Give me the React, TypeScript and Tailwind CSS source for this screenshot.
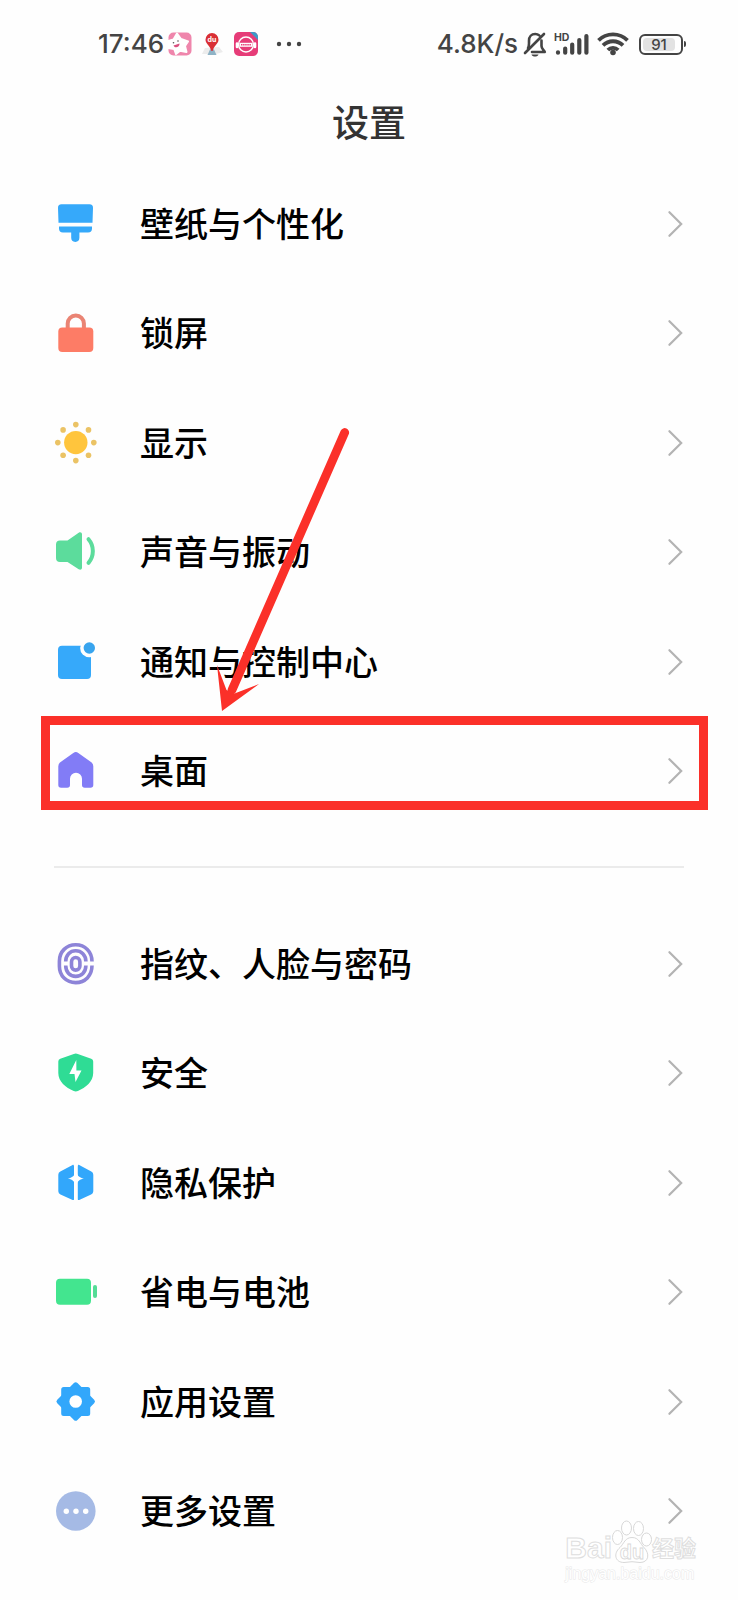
import type { ReactNode } from "react";

type Item = { label: string; icon: ReactNode; marked?: boolean };

const Icon = ({ children }: { children: ReactNode }) => (
	<svg viewBox="0 0 44 44" className="size-11 shrink-0" aria-hidden="true">
		{children}
	</svg>
);

const BrushIcon = () => (
	<Icon>
		<path
			fill="#36a9fa"
			d="M7.5 2.3h28a3.5 3.5 0 0 1 3.5 3.6l-.5 14.8h-34L4 5.9a3.5 3.5 0 0 1 3.5-3.6ZM5 24.4h33v2a4 4 0 0 1-4 4h-8.6v5.4a4.1 4.1 0 0 1-8.2 0v-5.4H9a4 4 0 0 1-4-4Z"
		/>
	</Icon>
);

const LockIcon = () => (
	<Icon>
		<path
			fill="none"
			stroke="#ea8474"
			strokeWidth="4"
			d="M13.7 18v-5.4a8.1 8.1 0 0 1 16.2 0V18"
		/>
		<rect x="4.3" y="16.4" width="35" height="24.6" rx="4" fill="#fd7c66" />
	</Icon>
);

const SunIcon = () => (
	<Icon>
		<circle cx="21.8" cy="21.6" r="11.7" fill="#ffc53d" />
		<g fill="#ebc365">
			<circle cx="21.8" cy="3.6" r="2.8" />
			<circle cx="21.8" cy="39.6" r="2.8" />
			<circle cx="3.8" cy="21.6" r="2.8" />
			<circle cx="39.8" cy="21.6" r="2.8" />
			<circle cx="9.1" cy="8.9" r="2.8" />
			<circle cx="34.5" cy="8.9" r="2.8" />
			<circle cx="9.1" cy="34.3" r="2.8" />
			<circle cx="34.5" cy="34.3" r="2.8" />
		</g>
	</Icon>
);

const SoundIcon = () => (
	<Icon>
		<path
			fill="#5cdc9c"
			d="M6 10.4h7.5l11.2-7.7c1.5-1 3.3-.4 3.3 1.5v33.6c0 1.9-1.8 2.5-3.3 1.5l-11.2-7.2H6a4 4 0 0 1-4-4V14.4a4 4 0 0 1 4-4Z"
		/>
		<path
			fill="none"
			stroke="#5cdc9c"
			strokeWidth="4"
			strokeLinecap="round"
			d="M34.5 9.2c5.800 6.600 5.800 17.200 0 23.600"
		/>
	</Icon>
);

const NoticeIcon = () => (
	<Icon>
		<rect x="4" y="5.7" width="33" height="33.3" rx="4" fill="#36a9fa" />
		<circle cx="35.3" cy="8" r="9.2" fill="#fefefe" />
		<circle cx="35.3" cy="8" r="5.7" fill="#38a4ee" />
	</Icon>
);

const HomeIcon = () => (
	<Icon>
		<path
			fill="#827cf6"
			d="M19.3 4.1a4 4 0 0 1 5 0l13 9.2a5 5 0 0 1 2 4V36a2.8 2.8 0 0 1-2.8 2.8h-5.7A2.8 2.8 0 0 1 28 36v-6.2a6 6 0 0 0-12 0V36a2.8 2.8 0 0 1-2.8 2.8H7.1A2.8 2.8 0 0 1 4.3 36V17.3a5 5 0 0 1 2-4Z"
		/>
	</Icon>
);

const FingerprintIcon = () => (
	<Icon>
		<g fill="none" stroke="#8d84d8" strokeWidth="3.6">
			<path d="M38 19.6C38 9.6 31 2.8 21.7 2.8S5.4 9.6 5.4 19.2v5c0 9.600 7 16.400 16.300 16.400S38 33.800 38 23.600" />
			<path d="M11.7 19.6c0-6.600 4.400-10.800 10-10.800s10.200 4.200 10.200 10.800M11.7 23.600c0 6.600 4.400 10.800 10 10.800s10.200-4.200 10.200-10.800" />
			<rect x="17.5" y="15.5" width="8.400" height="12.600" rx="4.200" />
		</g>
	</Icon>
);

const ShieldIcon = () => (
	<Icon>
		<path
			fill="#2fdc95"
			d="M19.8 2.9a5 5 0 0 1 4 0l13.4 4.9a3 3 0 0 1 2 2.8V22c0 8.6-7.4 14.5-15.3 18a5 5 0 0 1-4.2 0C11.7 36.5 4.300 30.600 4.300 22V10.600a3 3 0 0 1 2-2.800Z"
		/>
		<path fill="#fff" d="m22.300 9-7 13.900h5.200l1 8.100 6-11.500h-5.100Z" />
	</Icon>
);

const PrivacyIcon = () => (
	<Icon>
		<path
			fill="#32a7fb"
			d="M20 5.4v33c0 .6-.7.9-1.4.6L6.5 33.4a3.6 3.6 0 0 1-2.2-3.2V13.7a3.6 3.6 0 0 1 2-3.2l12.300-6.600c.8-.4 1.400.4 1.400 1.500ZM23.800 5.400v33c0 .6.700.9 1.400.6l11.900-5.600a3.600 3.600 0 0 0 2.200-3.200V13.700a3.600 3.600 0 0 0-2-3.200L25.200 3.900c-.8-.4-1.400.4-1.400 1.500Z"
		/>
		<path
			fill="#fff"
			d="M21.900 9c.8 5.400 3 7.600 8 8.600-5 1-7.200 3.200-8 8.600-.8-5.400-3-7.600-8-8.600 5-1 7.200-3.200 8-8.600Z"
		/>
	</Icon>
);

const PowerIcon = () => (
	<Icon>
		<rect x="2" y="8.7" width="35" height="26" rx="4" fill="#43e58f" />
		<rect x="39" y="15" width="4" height="13" rx="2" fill="#54dc96" />
	</Icon>
);

const GearIcon = () => (
	<Icon>
		<g fill="#32a7fb" stroke="#32a7fb" strokeWidth="5" strokeLinejoin="round">
			<path d="M9.7 9.5h24v24h-24Z" />
			<path d="m21.7 4.8 16.7 16.7-16.7 16.700L5 21.500Z" />
		</g>
		<circle cx="21.7" cy="21.5" r="6.3" fill="#fff" />
	</Icon>
);

const MoreIcon = () => (
	<Icon>
		<circle cx="21.8" cy="22" r="19.8" fill="#a5bae5" />
		<g fill="#fff">
			<circle cx="12.3" cy="22.3" r="2.7" />
			<circle cx="22" cy="22.3" r="2.7" />
			<circle cx="31.7" cy="22.3" r="2.7" />
		</g>
	</Icon>
);

const general: Item[] = [
	{ label: "壁纸与个性化", icon: <BrushIcon /> },
	{ label: "锁屏", icon: <LockIcon /> },
	{ label: "显示", icon: <SunIcon /> },
	{ label: "声音与振动", icon: <SoundIcon /> },
	{ label: "通知与控制中心", icon: <NoticeIcon /> },
	{ label: "桌面", icon: <HomeIcon />, marked: true },
];

const device: Item[] = [
	{ label: "指纹、人脸与密码", icon: <FingerprintIcon /> },
	{ label: "安全", icon: <ShieldIcon /> },
	{ label: "隐私保护", icon: <PrivacyIcon /> },
	{ label: "省电与电池", icon: <PowerIcon /> },
	{ label: "应用设置", icon: <GearIcon /> },
	{ label: "更多设置", icon: <MoreIcon /> },
];

const SettingsList = ({ items }: { items: Item[] }) => (
	<ul>
		{items.map(({ label, icon, marked }) => (
			<li key={label} className="relative odd:h-[109px] even:h-[110px]">
				<button
					type="button"
					className="flex size-full items-center gap-[42px] px-[54px] text-left"
				>
					{icon}
					<span className="grow pt-0.5 text-[34px] leading-[48px] font-medium text-black">
						{label}
					</span>
					<svg
						viewBox="0 0 18 28"
						className="h-7 w-[18px] shrink-0"
						fill="none"
						stroke="#b3b3b3"
						strokeWidth="2.2"
						strokeLinecap="round"
						aria-hidden="true"
					>
						<path d="M3.4 2.2 15.2 14 3.4 25.8" />
					</svg>
				</button>
				{marked && (
					<div className="pointer-events-none absolute top-0 right-[30px] left-[41px] h-[94px] border-9 border-[#fb3029]" />
				)}
			</li>
		))}
	</ul>
);

const StatusBar = () => (
	<div className="flex h-[88px] items-center justify-between pr-[52px] pl-[98px] text-[26px] leading-8 font-medium text-[#444]">
		<div className="flex items-center">
			<time>17:46</time>
			<svg viewBox="0 0 24 24" className="ml-1 size-6" aria-hidden="true">
				<rect x=".5" y=".5" width="23" height="23" rx="5" fill="#ef86ac" />
				<path
					fill="#fff"
					stroke="#fff"
					strokeWidth="2"
					strokeLinejoin="round"
					d="m9 1.500 4 5.500 7 2.500-3 4.500 1.500 6-6.500-1.300L8 22l-1.800-5L0 16V9l5.500-1.500Z"
				/>
				<path fill="#d9507f" d="m5.500 13.500 6-2c.5 3.500-4.500 5.500-6 2Z" />
				<circle cx="5.500" cy="10.800" r=".8" fill="#555" />
				<circle cx="10" cy="9" r=".8" fill="#555" />
			</svg>
			<svg viewBox="0 0 24 24" className="ml-2 size-6" aria-hidden="true">
				<path fill="#ececec" d="m5 16 14-1 4 5-7 2H2Z" />
				<path fill="#8fb3c6" d="m10 17.500-2.500 5.500h9L14 17.500Z" />
				<path
					fill="#d92f35"
					d="M12 1a6.800 6.800 0 0 1 6.500 6.800c0 4-5 6-5.500 11h-2c-.5-5-5.500-7-5.500-11A6.800 6.800 0 0 1 12 1Z"
				/>
				<text
					x="12"
					y="10"
					fontSize="7"
					fontWeight="700"
					textAnchor="middle"
					fill="#fff"
				>
					du
				</text>
			</svg>
			<svg viewBox="0 0 24 24" className="ml-2.5 size-6" aria-hidden="true">
				<rect width="24" height="24" rx="5" fill="#e63c78" />
				<path fill="#3b9bc9" d="M16 0h3a5 5 0 0 1 5 5v3Z" />
				<circle cx="12" cy="12.5" r="7.500" fill="none" stroke="#fff" strokeWidth="1.400" />
				<path
					stroke="#fff"
					strokeWidth="2.600"
					strokeLinecap="round"
					d="M3 11.500v3.500M21 11.500v3.500"
				/>
				<path stroke="#fff" strokeWidth="4" d="M5.500 12.800h13" />
				<path stroke="#e63c78" strokeWidth="1.600" strokeDasharray="1.500 .6" d="M7 12.800h10" />
			</svg>
			<svg viewBox="0 0 26 6" className="ml-[18px] h-1.5 w-[26px]" fill="#444" aria-hidden="true">
				<circle cx="3" cy="3" r="2.200" />
				<circle cx="13" cy="3" r="2.200" />
				<circle cx="23" cy="3" r="2.200" />
			</svg>
		</div>
		<div className="flex items-center">
			<span>4.8K/s</span>
			<svg
				viewBox="0 0 24 26"
				className="ml-[5px] h-[26px] w-6"
				fill="none"
				stroke="#444"
				strokeWidth="2.600"
				strokeLinecap="round"
				strokeLinejoin="round"
				aria-hidden="true"
			>
				<path d="M2 22 21 3M18.500 9.500v5.500c0 2.500 1.700 3.600 3.300 6H9M5 17c.8-1.500 1-2.500 1-4.500v-2.800c0-4 2.500-6.700 6.200-6.700 1.600 0 3 .5 4 1.400" />
				<path fill="#444" stroke="none" d="M8.500 23.500h7c-.8 2.700-6.200 2.700-7 0Z" />
			</svg>
			<svg viewBox="0 0 36 26" className="ml-[7px] h-[26px] w-9" aria-hidden="true">
				<text x="0" y="9.5" fontSize="10.500" fontWeight="700" fill="#444">
					HD
				</text>
				<g stroke="#444" strokeWidth="4.200" strokeLinecap="round">
					<path d="M4 21.300v.4M11.200 17.500v4.200M18.200 13.500v8.200M25.300 9v12.700M32.400 5v16.700" />
				</g>
			</svg>
			<svg
				viewBox="0 0 32 26"
				className="ml-[7px] h-[26px] w-8"
				fill="none"
				stroke="#444"
				strokeWidth="3.800"
				aria-hidden="true"
			>
				<path d="M1.500 9.400a20.500 20.500 0 0 1 29 0M6 14.400a14.100 14.100 0 0 1 20 0M10.800 19a7.400 7.400 0 0 1 10.400 0" />
				<circle cx="16" cy="21.500" r="2.800" fill="#444" stroke="none" />
			</svg>
			<div className="ml-2.5 flex items-center gap-px">
				<div className="h-[21px] w-11 rounded-md border-2 border-[#444] p-0.5">
					<div className="mr-1 flex h-full items-center justify-center rounded-sm bg-[#e2e2e2] text-[15px] leading-none">
						91
					</div>
				</div>
				<div className="h-1.5 w-0.5 rounded-r-sm bg-[#444]" />
			</div>
		</div>
	</div>
);

const Arrow = () => (
	<svg
		viewBox="0 0 140 290"
		className="pointer-events-none absolute top-[426px] left-[214px] h-[290px] w-[140px]"
		aria-hidden="true"
	>
		<path
			stroke="#fb3029"
			strokeWidth="8.800"
			strokeLinecap="round"
			d="M130.700 6.500 18 264"
		/>
		<path fill="#fb3029" d="m8 285-5-46 9.500 25 8 3.500L45 258Z" />
	</svg>
);

const Watermark = () => (
	<div className="pointer-events-none absolute right-[42px] bottom-4 flex flex-col text-white [-webkit-text-stroke:1px_#dedede]">
		<div className="flex items-end">
			<span className="text-[30px] leading-8 font-bold font-['Liberation_Sans']">
				Bai
			</span>
			<svg viewBox="0 0 40 44" className="h-11 w-10" fill="#fff" stroke="#d8d8d8" aria-hidden="true">
				<ellipse cx="5.500" cy="17.500" rx="5" ry="7" />
				<ellipse cx="14.500" cy="8" rx="5" ry="7" />
				<ellipse cx="26.500" cy="8.500" rx="5" ry="7" />
				<ellipse cx="34.500" cy="19.500" rx="5" ry="6.500" />
				<path d="M20 17.500c7 0 8 6 12 10 6 6 5 15-4 15-3 0-5-.8-8-.8s-5 .8-8 .8c-9 0-11-9-4-15 4-4 5-10 12-10Z" />
				<text
					x="20"
					y="39"
					fontSize="20"
					fontFamily="Liberation Sans"
					fontWeight="700"
					textAnchor="middle"
					strokeWidth=".8"
				>
					du
				</text>
			</svg>
			<span className="text-[22px] leading-8 font-bold">经验</span>
		</div>
		<span className="text-[16px] leading-5 font-['Liberation_Sans'] [-webkit-text-stroke:1px_#e8e8e8] [paint-order:stroke_fill]">
			jingyan.baidu.com
		</span>
	</div>
);

export default function App() {
	return (
		<div className="relative min-h-screen bg-[#fefefe] pb-[33px] font-['Inter','Noto_Sans_CJK_SC',sans-serif]">
			<StatusBar />
			<h1 className="pt-2 pb-[17px] text-center text-[37px] leading-[56px] font-medium text-[#333]">
				设置
			</h1>
			<main>
				<SettingsList items={general} />
				<hr className="mx-[54px] mt-10 mb-[41px] border-t-2 border-[#ebebeb]" />
				<SettingsList items={device} />
			</main>
			<Arrow />
			<Watermark />
		</div>
	);
}
